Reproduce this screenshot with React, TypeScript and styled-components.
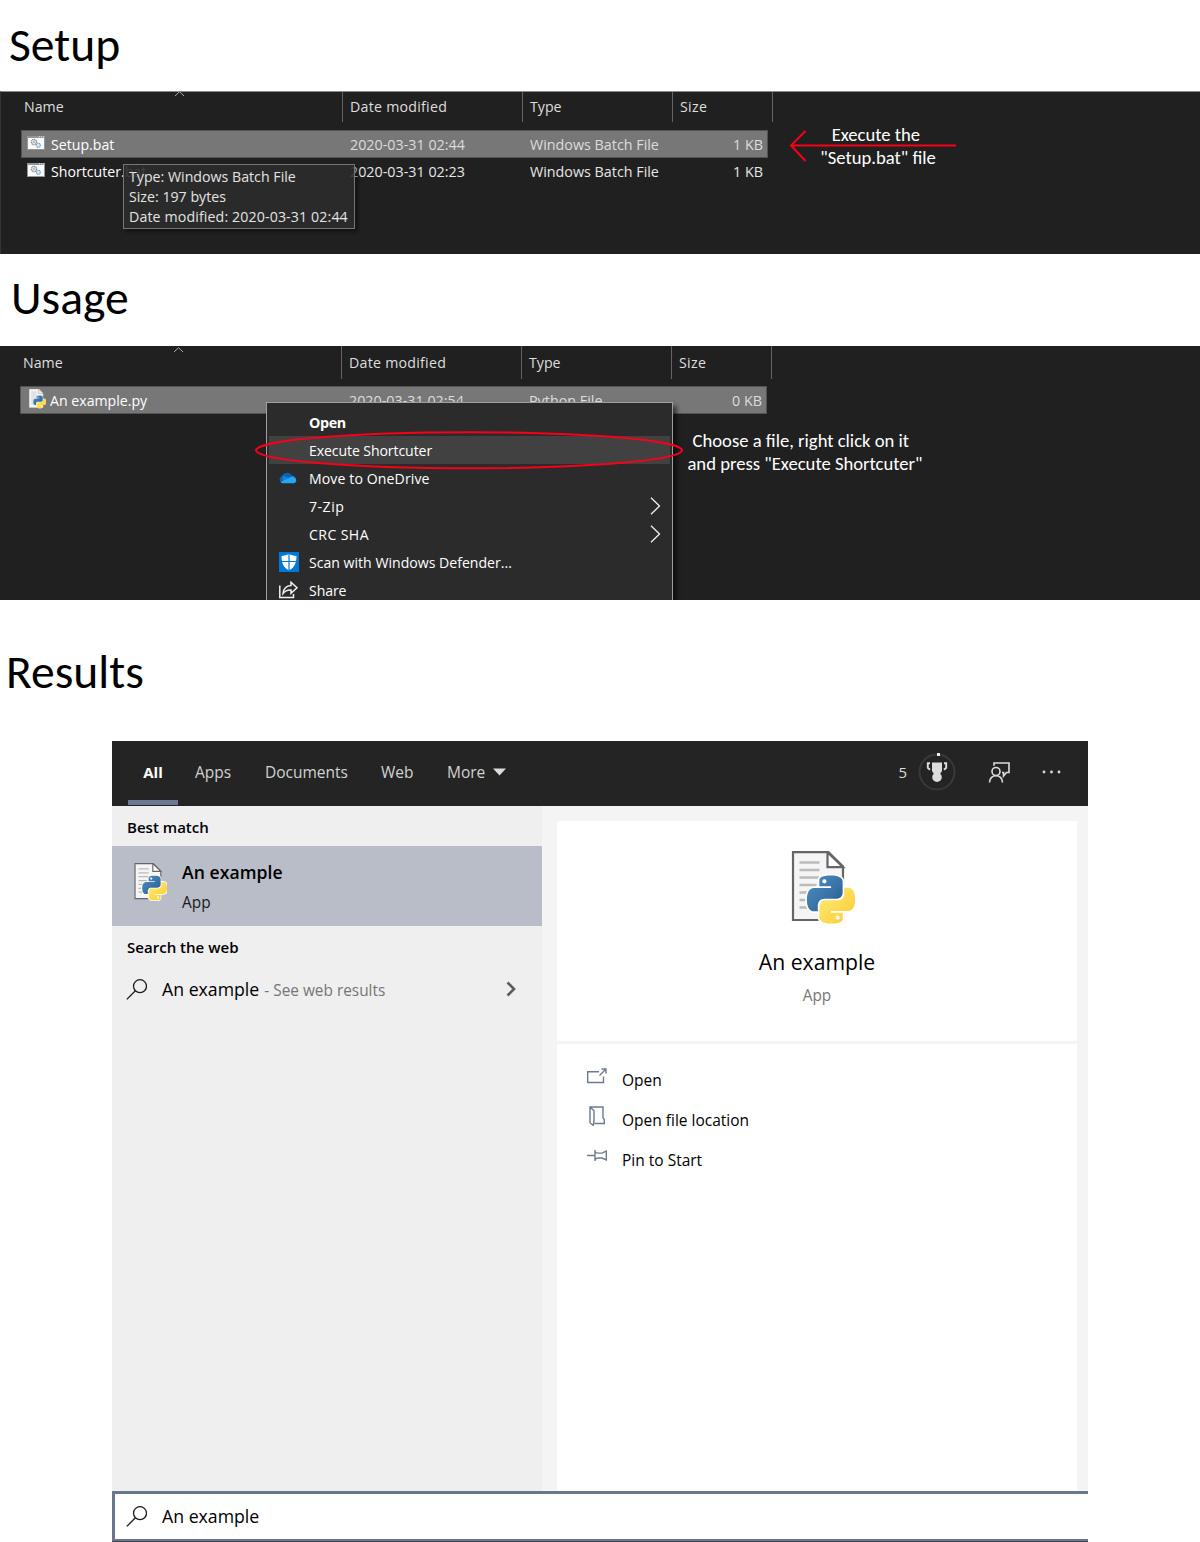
import React, { useId } from 'react';
import styled, { createGlobalStyle, css } from 'styled-components';

const ui = `"Open Sans", "Noto Sans", "Liberation Sans", sans-serif`;
const doc = `Carlito, Calibri, Lato, sans-serif`;

const GlobalStyle = createGlobalStyle`
  *, *::before, *::after { box-sizing: border-box; }
  body { margin: 0; background: #fff; }
  svg { display: block; flex: none; }
`;

const Page = styled.main`
  width: 1200px;
  height: 1542px;
  overflow: hidden;
  font-family: ${ui};
  white-space: nowrap;
`;

const Heading = styled.h1<{ $height: number; $top: number; $left: number }>`
  margin: 0;
  height: ${p => p.$height}px;
  padding: ${p => p.$top}px 0 0 ${p => p.$left}px;
  font: 400 47.6px/60px ${doc};
  color: #000;
`;

/* ---------- Explorer ---------- */

const Explorer = styled.section<{ $height: number; $topLine?: boolean }>`
  position: relative;
  height: ${p => p.$height}px;
  overflow: hidden;
  background: #202020;
  ${p => p.$topLine && css`
    border-top: 1px solid #8a8a8a;
    border-left: 1px solid #343434;
  `}
`;

const Columns = styled.div<{ $height: number }>`
  position: relative;
  display: grid;
  grid-template-columns: 342px 180px 150px 100px;
  height: ${p => p.$height}px;
`;

const ColumnHead = styled.div<{ $pad?: number; $tracking?: number; $lift: number }>`
  display: flex;
  align-items: center;
  padding: 0 0 ${p => p.$lift}px ${p => p.$pad ?? 7}px;
  border-right: 1px solid #636363;
  color: #dedede;
  font-size: 14.2px;
  letter-spacing: ${p => p.$tracking ?? 0}px;
`;

const SortMark = styled.svg<{ $top: number }>`
  position: absolute;
  top: ${p => p.$top}px;
  left: 173px;
`;

const Rows = styled.div<{ $top: number; $left: number }>`
  width: 747px;
  margin: ${p => p.$top}px 0 0 ${p => p.$left}px;
`;

const Row = styled.div<{ $selected?: boolean }>`
  display: grid;
  grid-template-columns: 328px 180px 150px 1fr;
  align-items: center;
  height: 28px;
  margin-bottom: -1px;
  padding-right: 4px;
  border: 1px solid ${p => (p.$selected ? '#535353' : 'transparent')};
  background: ${p => (p.$selected ? '#777' : 'transparent')};
  color: ${p => (p.$selected ? '#dcdcdc' : '#e6e6e6')};
  font-size: 14.32px;
`;

const FileName = styled.div`
  display: flex;
  align-items: center;
  height: 26px;
  color: #fff;
  font-size: 14.15px;
`;

const FileIcon = styled.span<{ $pad: number }>`
  display: flex;
  width: 29px;
  padding: 0 0 2px ${p => p.$pad}px;
`;

const FileSize = styled.div`
  text-align: right;
`;

const Tooltip = styled.div`
  position: absolute;
  left: 122px;
  top: 72px;
  width: 232px;
  height: 65px;
  padding: 2px 0 0 5px;
  border: 1px solid #767676;
  background: rgba(43, 43, 43, 0.9);
  box-shadow: 3px 3px 3px rgba(0, 0, 0, 0.4);
  color: #e4e4e4;
  font-size: 14.2px;
  line-height: 20px;
`;

const TooltipLine = styled.div<{ $tracking?: number }>`
  letter-spacing: ${p => p.$tracking ?? 0}px;
`;

const Note = styled.p<{ $left: number; $top: number; $width: number }>`
  position: absolute;
  left: ${p => p.$left}px;
  top: ${p => p.$top}px;
  width: ${p => p.$width}px;
  margin: 0;
  color: #fff;
  font: 400 18.65px/23px ${doc};
  text-align: center;
`;

const Mark = styled.svg<{ $left: number; $top: number }>`
  position: absolute;
  left: ${p => p.$left}px;
  top: ${p => p.$top}px;
`;

const Menu = styled.div`
  position: absolute;
  left: 266px;
  top: 56px;
  width: 407px;
  height: 240px;
  padding: 5px 2px;
  border: 1px solid #a0a0a0;
  background: #2b2b2b;
  box-shadow: 4px 4px 4px rgba(0, 0, 0, 0.5);
`;

const MenuItem = styled.div<{ $active?: boolean; $bold?: boolean; $tracking?: number }>`
  display: grid;
  grid-template-columns: 40px 1fr 20px;
  align-items: center;
  height: 28px;
  background: ${p => (p.$active ? '#414141' : 'transparent')};
  color: #fff;
  font-size: ${p => (p.$bold ? 14.3 : 14.1)}px;
  font-weight: ${p => (p.$bold ? 700 : 400)};
  letter-spacing: ${p => p.$tracking ?? 0}px;
`;

const MenuIcon = styled.span`
  display: flex;
  padding-left: 10px;
`;

/* ---------- Search window ---------- */

const SearchWindow = styled.section`
  display: flex;
  flex-direction: column;
  width: 976px;
  height: 801px;
  margin-left: 112px;
`;

const TopBar = styled.header`
  display: flex;
  justify-content: space-between;
  height: 65px;
  padding: 0 26px 0 16px;
  background: #242424;
`;

const Tabs = styled.nav`
  display: flex;
  gap: 17px;
`;

const Tab = styled.span<{ $active?: boolean; $width: number }>`
  display: flex;
  align-items: center;
  justify-content: ${p => (p.$active ? 'center' : 'flex-start')};
  gap: 8px;
  width: ${p => p.$width}px;
  height: ${p => (p.$active ? 64 : 62)}px;
  padding-top: ${p => (p.$active ? 2 : 0)}px;
  border-bottom: ${p => (p.$active ? '5px solid #6b7a90' : '0')};
  color: ${p => (p.$active ? '#fff' : '#d2d2d2')};
  font-size: ${p => (p.$active ? 15 : 15.5)}px;
  font-weight: ${p => (p.$active ? 700 : 400)};
`;

const Tools = styled.div`
  display: flex;
  align-items: center;
  height: 62px;
  color: #dcdcdc;
  font-size: 15px;
`;

const Medal = styled.svg`
  margin: 0 32px 0 11px;
`;

const Dots = styled.svg`
  margin-left: 32px;
`;

const Body = styled.div`
  display: flex;
  flex: 1;
`;

const ResultPane = styled.div`
  width: 430px;
  background: #efefef;
`;

const GroupTitle = styled.h2`
  display: flex;
  align-items: center;
  height: 40px;
  margin: 0;
  padding: 2px 0 0 15px;
  font-size: 15.05px;
  font-weight: 600;
  color: #000;
`;

const BestMatch = styled.div`
  display: flex;
  height: 80px;
  padding: 17px 0 0 22px;
  background: #b9bdc7;
`;

const BestText = styled.div`
  margin: -6px 0 0 15px;
`;

const BestName = styled.div`
  font-size: 17.6px;
  font-weight: 600;
  line-height: 31px;
  letter-spacing: 0.05px;
`;

const Kind = styled.div<{ $muted?: boolean }>`
  color: ${p => (p.$muted ? '#767676' : '#1a1a1a')};
  font-size: 15.4px;
  line-height: 30px;
`;

const WebResult = styled.div`
  display: flex;
  align-items: center;
  height: 46px;
  padding: 0 26px 0 14px;
`;

const Query = styled.span`
  margin-left: 15px;
  color: #000;
  font-size: 17.7px;
`;

const Hint = styled.span`
  flex: 1;
  padding: 2px 0 0 5px;
  color: #767676;
  font-size: 15.4px;
`;

const DetailPane = styled.div`
  display: flex;
  flex: 1;
  flex-direction: column;
  gap: 3px;
  padding: 15px 11px 0 15px;
  background: #f4f4f4;
`;

const AppCard = styled.div`
  display: flex;
  flex-direction: column;
  align-items: center;
  height: 220px;
  padding-top: 30px;
  background: #fff;
`;

const AppArt = styled.div`
  margin-left: 11px;
`;

const AppName = styled.div`
  margin: 20px 0 2px;
  color: #000;
  font-size: 21.2px;
  line-height: 34px;
`;

const Actions = styled.div`
  flex: 1;
  padding: 15px 0 0 30px;
  background: #fff;
`;

const Action = styled.div`
  display: flex;
  align-items: center;
  gap: 15px;
  height: 40px;
  padding-top: 1px;
  color: #000;
  font-size: 15.5px;

  svg { margin-bottom: 7px; }
`;

const SearchBox = styled.div`
  display: flex;
  align-items: center;
  height: 51px;
  padding: 0 0 1px 11px;
  border: solid #68778d;
  border-width: 3px 0 3px 3px;
  background: #fff;
`;

const Baseline = styled.div`
  height: 1px;
  margin-top: -1px;
  background: #3c434d;
`;

/* ---------- Drawings ---------- */

const BLUE = 'M14.25.18l.9.2.73.26.59.3.45.32.34.34.25.34.16.33.1.3.04.26.02.2-.01.13V8.5l-.05.63-.13.55-.21.46-.26.38-.3.31-.33.25-.35.19-.35.14-.33.1-.3.07-.26.04-.21.02H8.77l-.69.05-.59.14-.5.22-.41.27-.33.32-.27.35-.2.36-.15.37-.1.35-.07.32-.04.27-.02.21v3.06H3.17l-.21-.03-.28-.07-.32-.12-.35-.18-.36-.26-.36-.36-.35-.46-.32-.59-.28-.73-.21-.88-.14-1.05-.05-1.23.06-1.22.16-1.04.24-.87.32-.71.36-.57.4-.44.42-.33.42-.24.4-.16.36-.1.32-.05.24-.01h.16l.06.01h8.16v-.83H6.18l-.01-2.75-.02-.37.05-.34.11-.31.17-.28.25-.26.31-.23.38-.2.44-.18.51-.15.58-.12.64-.1.71-.06.77-.04.84-.02 1.27.05z';
const YELLOW = 'M21.04 6.11l.28.06.32.12.35.18.36.27.36.35.35.47.32.59.28.73.21.88.14 1.04.05 1.23-.06 1.23-.16 1.04-.24.86-.32.71-.36.57-.4.45-.42.33-.42.24-.4.16-.36.09-.32.05-.24.02-.16-.01h-8.22v.82h5.84l.01 2.76.02.36-.05.34-.11.31-.17.29-.25.25-.31.24-.38.2-.44.17-.51.15-.58.13-.64.09-.71.07-.77.04-.84.01-1.27-.04-1.07-.14-.9-.2-.73-.25-.59-.3-.45-.33-.34-.34-.25-.34-.16-.33-.1-.3-.04-.25-.02-.2.01-.13v-5.34l.05-.64.13-.54.21-.46.26-.38.3-.32.33-.24.35-.2.35-.14.33-.1.3-.06.26-.04.21-.02.13-.01h5.84l.69-.05.59-.14.5-.21.41-.28.33-.32.27-.35.2-.36.15-.36.1-.35.07-.32.04-.28.02-.21V6.07h2.09l.14.01z';

function PythonFile({ width, light }: { width: number; light?: boolean }) {
  const id = useId();
  return (
    <svg width={width} height={(width * 74) / 64} viewBox="0 0 64 74">
      <defs>
        <linearGradient id={`${id}b`} x1="0" y1="0" x2="1" y2="1">
          <stop offset="0" stopColor="#4f93c8" />
          <stop offset="1" stopColor="#28598b" />
        </linearGradient>
        <linearGradient id={`${id}y`} x1="0" y1="0" x2="1" y2="1">
          <stop offset="0" stopColor="#ffee80" />
          <stop offset="1" stopColor="#fdc92a" />
        </linearGradient>
      </defs>
      <path d="M2 1.200h35.500L52 15.500V69H2z" fill="#f5f5f5" stroke={light ? '#f5f5f5' : '#666'} strokeWidth="2.200" />
      <path d="M36.500 1.200v15H52z" fill="#fff" stroke={light ? '#999' : '#666'} strokeWidth="2.200" />
      <path d="M8.500 11.500h20M8.500 19h20M8.500 26.500h20M8.500 34h17M8.500 41.500h10M8.500 49h6M8.500 56.500h8" stroke="#bcbcbc" strokeWidth="2.400" />
      <g transform="translate(16 24.500) scale(2)">
        <g stroke="#fff" strokeWidth={light ? 0 : 1.7} strokeLinejoin="round" fill="#fff">
          <path d={BLUE} />
          <path d={YELLOW} />
        </g>
        <path d={BLUE} fill={`url(#${id}b)`} />
        <path d={YELLOW} fill={`url(#${id}y)`} />
        <circle cx="8.700" cy="2.900" r="1.050" fill="#fff" />
        <circle cx="15.300" cy="21.100" r="1.050" fill="#fff" />
      </g>
    </svg>
  );
}

function BatchIcon() {
  return (
    <svg width="18" height="14" viewBox="0 0 18 14">
      <rect width="18" height="14" fill="#8f979c" />
      <rect x="1" y="2" width="16" height="11" fill="#fafafa" />
      <path d="M12 .8h1M14 .8h1M16 .8h1" stroke="#e8e8e8" />
      <circle cx="7" cy="6" r="2.600" fill="none" stroke="#7f868c" strokeWidth="1.300" strokeDasharray="1.200 .500" />
      <circle cx="7" cy="6" r="1" fill="none" stroke="#8b9298" strokeWidth=".7" />
      <circle cx="11.300" cy="9.300" r="2" fill="#dcebf5" stroke="#7fa3bd" strokeWidth="1.200" strokeDasharray="1.100 .400" />
    </svg>
  );
}

function Magnifier() {
  return (
    <svg width="21" height="21" viewBox="0 0 21 21" fill="none" stroke="#1c1c1c" strokeWidth="1.300">
      <circle cx="14" cy="7.200" r="6.500" />
      <path d="M9.400 11.800L.8 20.400" />
    </svg>
  );
}

function Submenu() {
  return (
    <svg width="11" height="18" viewBox="0 0 11 18">
      <path d="M1 .8L9.500 9 1 17.200" fill="none" stroke="#f2f2f2" strokeWidth="1.300" />
    </svg>
  );
}

function OneDrive() {
  return (
    <svg width="18" height="12" viewBox="0 0 18 12">
      <path d="M3.500 10.500A3.200 3.200 0 0 1 3 4.200C4.500 .5 10.500-.8 13 3.800L9.500 8z" fill="#0a63b5" />
      <path d="M3.200 4.200c2.300-.6 4 .5 6.300 2l3.800-2.400c2 .1 3.200 1.400 3.500 2.900L12 9.500H4z" fill="#1480d8" />
      <path d="M1.500 10L9.800 6c1.500-.9 3.200-1.400 5-.6 3.400 1 3.200 5.600-.3 5.800H4.200c-1.200 0-2.100-.4-2.700-1.200z" fill="#29a7ee" />
    </svg>
  );
}

function Defender() {
  return (
    <svg width="20" height="20" viewBox="0 0 20 20">
      <rect width="20" height="20" fill="#0078d7" />
      <path d="M10 1.800c2 1.500 4.600 2.100 7.500 2.100 0 7-2 11.600-7.500 14.300C4.500 15.500 2.500 10.900 2.500 3.900c2.900 0 5.500-.6 7.500-2.100z" fill="#fff" />
      <path d="M10 1v17M2 9.500h16" stroke="#0078d7" strokeWidth="1.200" />
    </svg>
  );
}

function ShareIcon() {
  return (
    <svg width="20" height="18" viewBox="0 0 20 18" fill="none" stroke="#f2f2f2" strokeWidth="1.500">
      <path d="M.8 4.500V16.500h13.700v-3.500" />
      <path d="M12 1.200L18 6.700l-6 5.500V9c-3.500-.3-5.700.7-8 3.500.5-4.700 3.200-7.700 8-8z" />
    </svg>
  );
}

function MedalIcon() {
  return (
    <Medal width="38" height="38" viewBox="0 0 38 38">
      <circle cx="19" cy="19" r="17.500" fill="none" stroke="#393939" strokeWidth="2" />
      <rect x="19" y="0" width="3" height="3" fill="#eee" />
      <path d="M14 9.500h10v8.500l-1.800 2.700a4.800 4.800 0 1 1-6.400 0L14 18z" fill="#dcdcdc" />
      <path d="M12 10.200H9.800v4.600l2.200 2M26 10.200h2.200v4.600L26 16.800" fill="none" stroke="#dcdcdc" strokeWidth="1.900" />
    </Medal>
  );
}

function FeedbackIcon() {
  return (
    <svg width="22" height="21" viewBox="0 0 22 21" fill="none" stroke="#dcdcdc" strokeWidth="1.600">
      <circle cx="8" cy="9.500" r="4" />
      <path d="M1.500 20.500c0-9 13-9 13 0" />
      <path d="M6 3.800V1h15v9.500h-2.500L15.500 14v-3.500h-1.500" />
    </svg>
  );
}

const actionStroke = { fill: 'none', stroke: '#6b7a90', strokeWidth: 1.4 };

function OpenIcon() {
  return (
    <svg width="20" height="16" viewBox="0 0 20 16" {...actionStroke}>
      <path d="M12 3.700H.7v10.800h15.800V8.500" />
      <path d="M12.500 7.500L18.500 1.500M14.500 1h4.500v4.500" />
    </svg>
  );
}

function FolderIcon() {
  return (
    <svg width="20" height="20" viewBox="0 0 20 20" {...actionStroke}>
      <path d="M3 17V1h13v11l1.300 1.500V17.500H7.500M3 1l4 3.800v9.500L6.300 19.300 3 17" />
    </svg>
  );
}

function PinIcon() {
  return (
    <svg width="20" height="14" viewBox="0 0 20 14" {...actionStroke}>
      <path d="M0 6.500h8M8 1v11M8 2.500c1 1.800 2.200 1.600 3.500 1.600h3.500L19.300 2v9L15 9h-3.500c-1.300 0-2.500 0-3.500 1.800" />
    </svg>
  );
}

/* ---------- Data ---------- */

const batchFiles = [
  { name: 'Setup.bat', date: '2020-03-31 02:44', selected: true },
  { name: 'Shortcuter.bat', date: '2020-03-31 02:23', selected: false },
];

interface Entry {
  label: string;
  icon?: React.ReactNode;
  bold?: boolean;
  active?: boolean;
  sub?: boolean;
  tracking?: number;
}

const menu: Entry[] = [
  { label: 'Open', bold: true, tracking: -0.35 },
  { label: 'Execute Shortcuter', active: true, tracking: -0.1 },
  { label: 'Move to OneDrive', icon: <OneDrive />, tracking: 0.1 },
  { label: '7-Zip', sub: true, tracking: 0.5 },
  { label: 'CRC SHA', sub: true, tracking: 0.4 },
  { label: 'Scan with Windows Defender...', icon: <Defender /> },
  { label: 'Share', icon: <ShareIcon />, tracking: -0.1 },
];

function ColumnHeads({ height, lift, caretTop }: { height: number; lift: number; caretTop: number }) {
  return (
    <Columns $height={height}>
      <ColumnHead $lift={lift} $pad={23}>Name</ColumnHead>
      <ColumnHead $lift={lift} $tracking={0.25}>Date modified</ColumnHead>
      <ColumnHead $lift={lift}>Type</ColumnHead>
      <ColumnHead $lift={lift} $tracking={0.3}>Size</ColumnHead>
      <SortMark $top={caretTop} width="11" height="6" viewBox="0 0 11 6">
        <path d="M1 5L5.500 .7 10 5" fill="none" stroke="#a8a8a8" />
      </SortMark>
    </Columns>
  );
}

export default function App() {
  return (
    <Page>
      <GlobalStyle />

      <Heading $height={91} $top={15} $left={9}>Setup</Heading>
      <Explorer $height={163} $topLine>
        <ColumnHeads height={30} lift={2} caretTop={-1} />
        <Rows $top={8} $left={20}>
          {batchFiles.map(f => (
            <Row key={f.name} $selected={f.selected}>
              <FileName><FileIcon $pad={5}><BatchIcon /></FileIcon>{f.name}</FileName>
              <div>{f.date}</div>
              <div>Windows Batch File</div>
              <FileSize>1 KB</FileSize>
            </Row>
          ))}
        </Rows>
        <Tooltip>
          <TooltipLine>Type: Windows Batch File</TooltipLine>
          <TooltipLine>Size: 197 bytes</TooltipLine>
          <TooltipLine $tracking={0.12}>Date modified: 2020-03-31 02:44</TooltipLine>
        </Tooltip>
        <Mark $left={787} $top={38} width="168" height="32" viewBox="0 0 168 32" fill="none" stroke="#f80018" strokeWidth="2">
          <path d="M168 15.500H3M17.500 1L3 15.500 17.500 31" />
        </Mark>
        <Note $left={777} $top={31} $width={200}>Execute the&nbsp;<br />"Setup.bat" file</Note>
      </Explorer>

      <Heading $height={92} $top={14} $left={11}>Usage</Heading>
      <Explorer $height={254}>
        <ColumnHeads height={33} lift={0} caretTop={1} />
        <Rows $top={7} $left={20}>
          <Row $selected>
            <FileName><FileIcon $pad={8}><PythonFile width={17} light /></FileIcon>An example.py</FileName>
            <div>2020-03-31 02:54</div>
            <div>Python File</div>
            <FileSize>0 KB</FileSize>
          </Row>
        </Rows>
        <Menu>
          {menu.map(m => (
            <MenuItem key={m.label} $bold={m.bold} $active={m.active} $tracking={m.tracking}>
              <MenuIcon>{m.icon}</MenuIcon>
              <span>{m.label}</span>
              {m.sub && <Submenu />}
            </MenuItem>
          ))}
        </Menu>
        <Mark $left={254} $top={84} width="430" height="40" viewBox="0 0 430 40" fill="none" stroke="#f80018" strokeWidth="2">
          <ellipse cx="215" cy="20.300" rx="213" ry="18" />
        </Mark>
        <Note $left={655} $top={83} $width={300}>
          Choose a file, right click on it&nbsp;&nbsp;<br />and press "Execute Shortcuter"
        </Note>
      </Explorer>

      <Heading $height={141} $top={42} $left={6}>Results</Heading>
      <SearchWindow>
        <TopBar>
          <Tabs>
            <Tab $active $width={50}>All</Tab>
            <Tab $width={53}>Apps</Tab>
            <Tab $width={99}>Documents</Tab>
            <Tab $width={49}>Web</Tab>
            <Tab $width={70}>
              More
              <svg width="14" height="8" viewBox="0 0 14 8"><path d="M0 .5h13L6.500 7.500z" fill="#dcdcdc" /></svg>
            </Tab>
          </Tabs>
          <Tools>
            5
            <MedalIcon />
            <FeedbackIcon />
            <Dots width="20" height="4" viewBox="0 0 20 4" fill="#dcdcdc">
              <circle cx="2" cy="2" r="1.400" />
              <circle cx="9.500" cy="2" r="1.400" />
              <circle cx="17" cy="2" r="1.400" />
            </Dots>
          </Tools>
        </TopBar>
        <Body>
          <ResultPane>
            <GroupTitle>Best match</GroupTitle>
            <BestMatch>
              <PythonFile width={33} />
              <BestText>
                <BestName>An example</BestName>
                <Kind>App</Kind>
              </BestText>
            </BestMatch>
            <GroupTitle>Search the web</GroupTitle>
            <WebResult>
              <Magnifier />
              <Query>An example</Query>
              <Hint>- See web results</Hint>
              <svg width="10" height="16" viewBox="0 0 10 16">
                <path d="M1.500 1.500L8 8l-6.500 6.500" fill="none" stroke="#5c5c5c" strokeWidth="2.600" />
              </svg>
            </WebResult>
          </ResultPane>
          <DetailPane>
            <AppCard>
              <AppArt><PythonFile width={64} /></AppArt>
              <AppName>An example</AppName>
              <Kind $muted>App</Kind>
            </AppCard>
            <Actions>
              <Action><OpenIcon />Open</Action>
              <Action><FolderIcon />Open file location</Action>
              <Action><PinIcon />Pin to Start</Action>
            </Actions>
          </DetailPane>
        </Body>
        <SearchBox>
          <Magnifier />
          <Query>An example</Query>
        </SearchBox>
        <Baseline />
      </SearchWindow>
    </Page>
  );
}
